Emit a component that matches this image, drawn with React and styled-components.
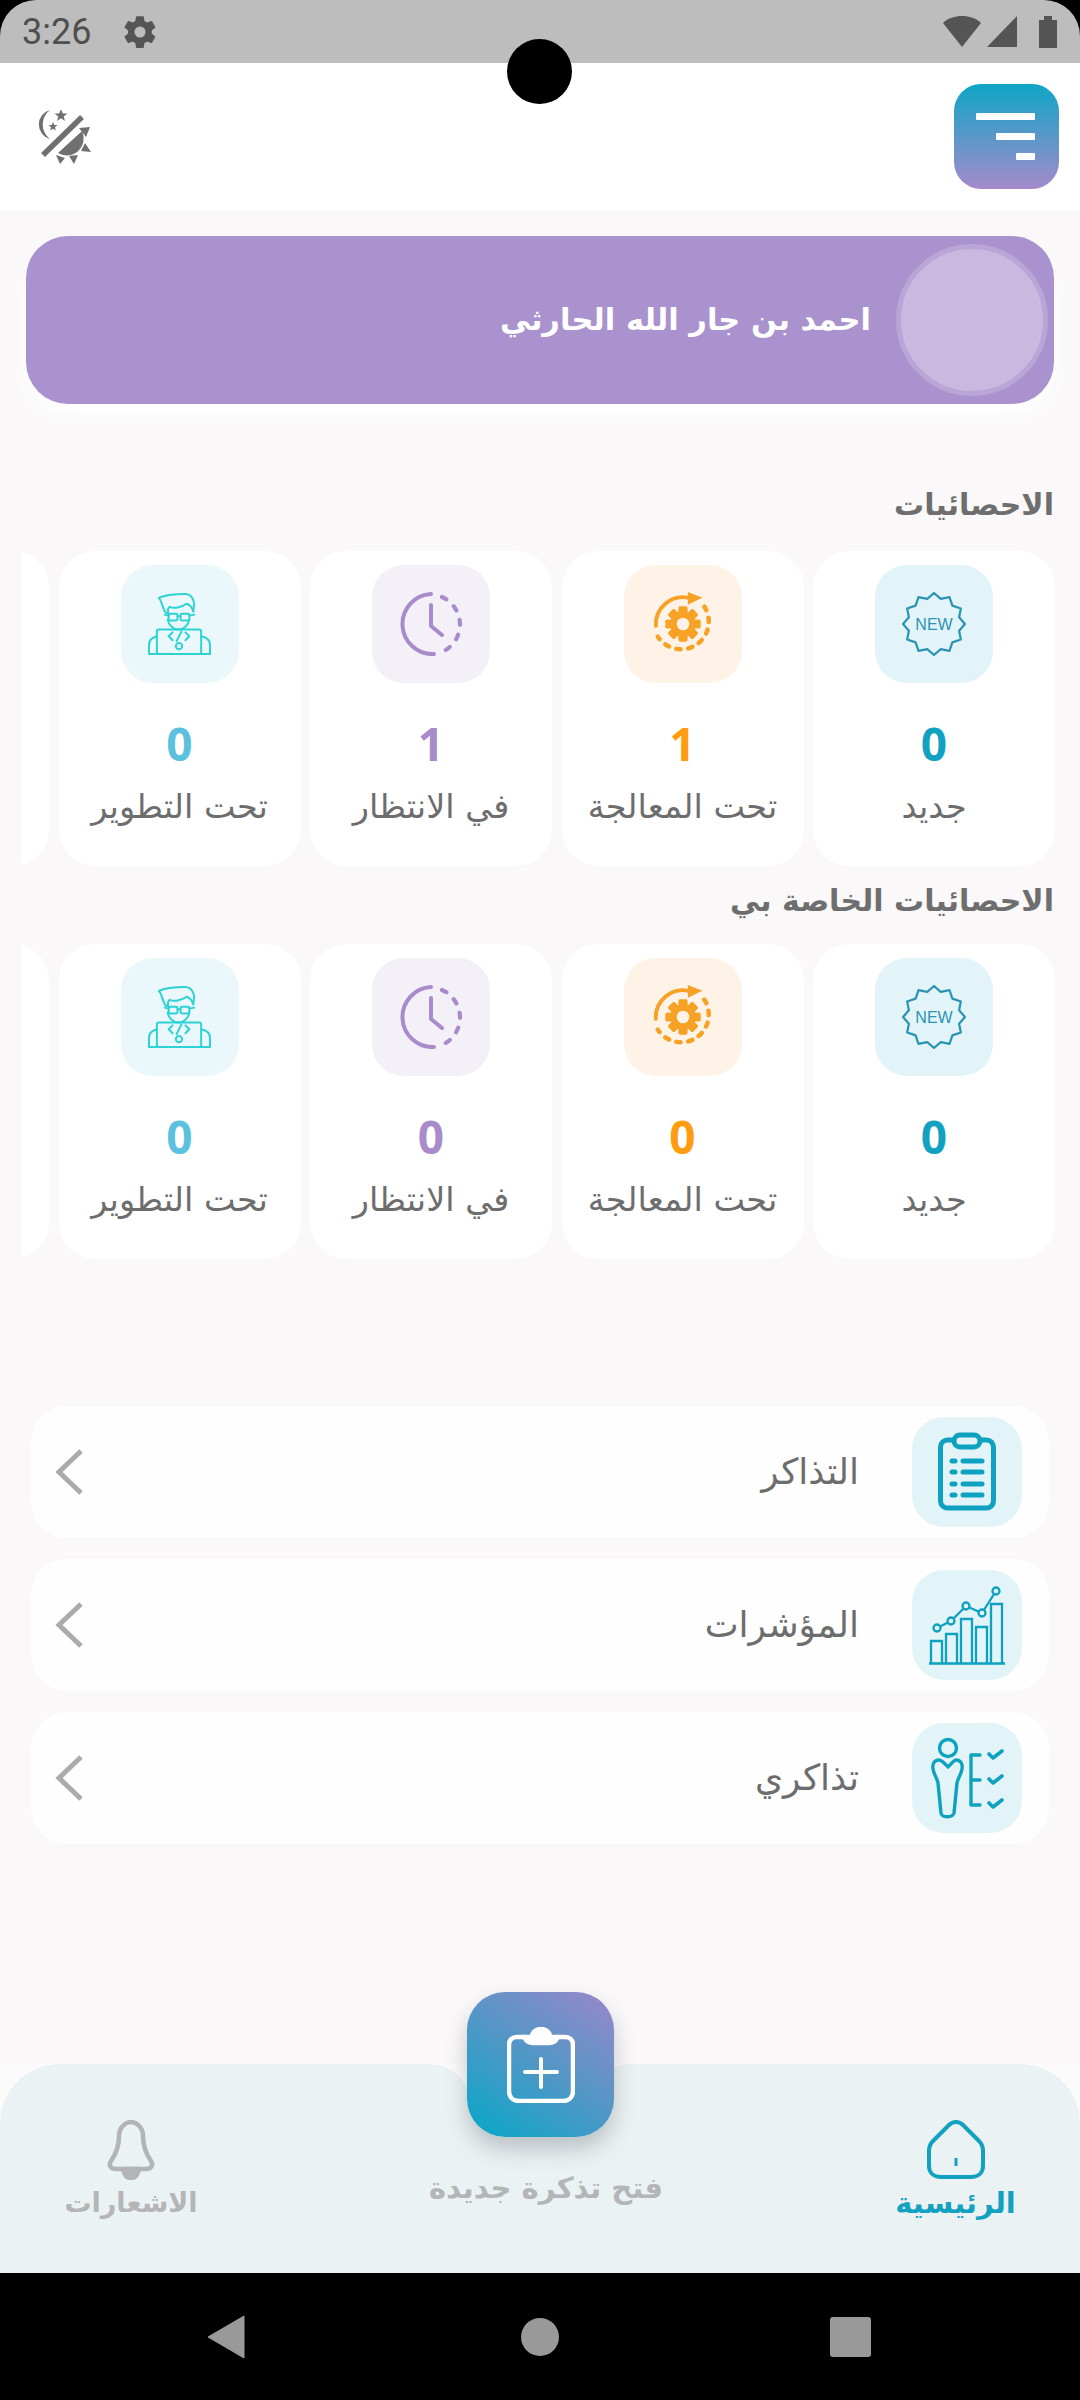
import React from "react";
import styled, { createGlobalStyle } from "styled-components";

const AR = `"DejaVu Sans", "Noto Sans", sans-serif`;

const Global = createGlobalStyle`
  html, body { margin: 0; padding: 0; background: #000; }
  * { box-sizing: border-box; }
`;

const Phone = styled.div`
  width: 1080px; height: 2400px; display: flex; flex-direction: column;
  background: #000; position: relative; overflow: hidden; font-family: ${AR};
`;
const StatusBar = styled.div`
  height: 63px; flex: none; background: #bdbdbd; border-radius: 36px 36px 0 0;
  display: flex; align-items: center; justify-content: space-between; padding: 0 20px 0 22px;
  direction: ltr; color: #555;
`;
const StatusLeft = styled.div`display: flex; align-items: center; gap: 30px;`;
const Clock = styled.span`font: 400 36px Roboto, sans-serif; color: #4f4f4f;`;
const StatusRight = styled.div`display: flex; align-items: center; gap: 3px;`;
const Camera = styled.div`
  position: absolute; left: 507px; top: 39px; width: 65px; height: 65px; border-radius: 50%; background: #000;
`;
const AppBar = styled.header`
  height: 147px; flex: none; background: #fff; display: flex; align-items: flex-start;
  justify-content: space-between; padding: 21px 21px 0 36px; direction: ltr;
`;
const ThemeIcon = styled.svg`width: 56px; height: 56px; margin-top: 26px;`;
const MenuButton = styled.div`
  width: 105px; height: 105px; border-radius: 27px; background: linear-gradient(180deg, #0ea5c6, #a58acb);
  display: flex; flex-direction: column; align-items: flex-end; gap: 13px; padding: 29px 24px 0 0;
`;
const MenuLine = styled.span`
  display: block; height: 7px; width: ${p => p.$w}px; background: #fff; border-radius: 1px;
`;
const Main = styled.main`
  flex: 1; min-height: 0; background: #faf8f9; direction: rtl; padding: 26px 0 0; display: flex; flex-direction: column;
`;
const Banner = styled.section`
  height: 168px; flex: none; margin: 0 26px; background: #a992cd; border-radius: 42px;
  box-shadow: 0 14px 16px rgba(255,255,255,.9);
  display: flex; align-items: center; padding-right: 6px; gap: 25px;
`;
const Avatar = styled.div`
  width: 152px; height: 152px; border-radius: 50%; background: #c9b9e1; border: 5px solid #b9a5d6; flex: none;
`;
const Name = styled.h1`margin: 0; color: #fff; font: 700 30.5px/1 ${AR};`;
const SectionTitle = styled.h2`
  margin: ${p => p.$top}px 26px ${p => p.$bottom}px 0;
  font: 700 30px/40px ${AR}; color: #6e6e6e;
`;
const Scroller = styled.div`
  display: flex; gap: 9.5px; overflow: hidden; margin: 0 25px 0 21px; flex: none;
`;
const StatCard = styled.div`
  width: 242px; height: 315px; flex: none; background: #fff; border-radius: 36px;
  display: flex; flex-direction: column; align-items: center; padding-top: 14px;
`;
const Tile = styled.div`
  width: ${p => p.$size || 118}px; height: ${p => p.$size || 118}px; flex: none; border-radius: 32px; background: ${p => p.$bg};
  display: flex; align-items: center; justify-content: center;
`;
const StatValue = styled.div`
  margin-top: 32px; font: 700 46px/56px "Open Sans", sans-serif; color: ${p => p.$c};
`;
const StatLabel = styled.div`
  margin-top: 16px; font: 400 33.5px/40px ${AR}; color: #6d6d6d; white-space: nowrap;
`;
const List = styled.div`
  margin: 147px 31px 0 31px; display: flex; flex-direction: column; gap: 21px;
`;
const Row = styled.div`
  height: 132px; background: #fefefe; border-radius: 36px; display: flex; align-items: center;
  padding: 0 27px 0 24px; gap: 53px;
`;
const RowTitle = styled.div`flex: 1; font: 400 36px/44px ${AR}; color: #6d6d6d;`;
const Nav = styled.nav`
  height: 209px; flex: none; display: flex; position: relative; direction: ltr; background: #fbfbfb;
`;
const SideTab = styled.div`
  flex: 1; background: #ebf2f3; border-radius: ${p => p.$left ? "60px 40px 0 0" : "40px 60px 0 0"};
  display: flex; flex-direction: column; align-items: ${p => p.$left ? "flex-start" : "flex-end"};
  padding: 56px ${p => p.$left ? 0 : 64}px 0 ${p => p.$left ? 44 : 0}px;
`;
const TabItem = styled.div`
  display: flex; flex-direction: column; align-items: center; gap: 2px; direction: rtl; width: ${p => p.$w}px;
`;
const TabLabel = styled.div`
  font: 700 ${p => p.$s}px/42px ${AR}; color: ${p => p.$c}; white-space: nowrap;
`;
const CenterTab = styled.div`
  width: 120px; flex: none; margin-top: 32px; background: #ebf2f3; position: relative;
  display: flex; justify-content: center; direction: rtl; padding-top: 71px;
`;
const CenterLabel = styled.div`
  font: 700 29px/42px ${AR}; color: #b3b5b7; white-space: nowrap; height: 42px; flex: none; margin-right: -32px;
`;
const Fab = styled.div`
  position: absolute; left: 467px; top: -72px; width: 147px; height: 145px; border-radius: 38px;
  background: linear-gradient(35deg, #12a5c8 8%, #5596c6 52%, #9a87ca 100%);
  box-shadow: 0 12px 22px rgba(60,70,80,.28);
  display: flex; align-items: center; justify-content: center;
`;
const SysNav = styled.div`
  height: 127px; flex: none; background: #000; position: relative; display: flex; align-items: center; direction: ltr;
  padding: 0 209px 0 207px; justify-content: space-between;
`;
const SysCircle = styled.div`width: 38px; height: 38px; border-radius: 50%; background: #999; margin-left: 4px;`;
const SysSquare = styled.div`width: 41px; height: 40px; border-radius: 3px; background: #999;`;

const Starburst = () => {
  const pts = [];
  const n = 12;
  for (let i = 0; i < n * 2; i++) {
    const a = (i * Math.PI) / n - Math.PI / 2;
    const r = i % 2 ? 26 : 31;
    pts.push(`${(32 + r * Math.cos(a)).toFixed(2)},${(32 + r * Math.sin(a)).toFixed(2)}`);
  }
  return (
    <svg width="64" height="64" viewBox="0 0 64 64">
      <polygon points={pts.join(" ")} fill="none" stroke="#2a93b3" strokeWidth="2.2" strokeLinejoin="round" />
      <text x="32" y="37.5" textAnchor="middle" fontFamily="Liberation Sans" fontSize="16" fill="#2a93b3">NEW</text>
    </svg>
  );
};

const GearIcon = () => {
  const teeth = [0, 45, 90, 135, 180, 225, 270, 315];
  return (
    <svg width="62" height="64" viewBox="0 0 64 64">
      <path d="M4 34A28 28 0 0 1 38 5" fill="none" stroke="#f7a125" strokeWidth="4" strokeLinecap="round" />
      <path d="M37 -1L52 5L37 12Z" fill="#f7a125" />
      <path d="M54 14A28 28 0 1 1 6 45" fill="none" stroke="#f7a125" strokeWidth="4.600" strokeLinecap="round" strokeDasharray="4.500 7.800" />
      {teeth.map(t => (
        <rect key={t} x="27.500" y="14" width="9" height="36" rx="1.500" fill="#f7a125" transform={`rotate(${t} 32 32)`} />
      ))}
      <circle cx="32" cy="32" r="13" fill="#f7a125" />
      <circle cx="32" cy="32" r="6.500" fill="#fef3e6" />
    </svg>
  );
};

const ClockIcon = () => (
  <svg width="64" height="64" viewBox="0 0 64 64">
    <path d="M32 2A30 30 0 0 0 35 62" fill="none" stroke="#a78bca" strokeWidth="4" strokeLinecap="round" />
    <path d="M43 5A30 30 0 0 1 45 59" fill="none" stroke="#a78bca" strokeWidth="4.200" strokeLinecap="round" strokeDasharray="5 10" />
    <path d="M32 13V34L43 43" fill="none" stroke="#a78bca" strokeWidth="4" strokeLinecap="round" strokeLinejoin="round" />
  </svg>
);

const DevIcon = () => (
  <svg width="63" height="63" viewBox="0 0 64 64" fill="none" stroke="#2dd2d4" strokeWidth="2" strokeLinejoin="round" strokeLinecap="round">
    <path d="M11 5C17 2 30 1 38 1C44 1 46 5 47 11L46 19C45 15 43 12 39 11C34 15 26 16 22 14C20 16 20 19 21 21L18 20C14 15 15 9 11 5Z" />
    <path d="M20 27C21 32 25 37 31 37C37 37 41 32 42 27" />
    <rect x="21" y="21" width="9" height="7" rx="1.500" />
    <rect x="33" y="21" width="9" height="7" rx="1.500" />
    <path d="M30 23.500H33M21 23L17 22M42 23L47 22" />
    <rect x="9" y="37" width="45" height="25" rx="2" />
    <path d="M1 62V53C1 48 5 45 9 44M54 44C59 45 63 48 63 53V62M1 62H63" />
    <path d="M25 40L21 44L25 48M38 40L42 44L38 48M34 39L29 49" />
    <circle cx="31.500" cy="54" r="3.200" />
  </svg>
);

const ClipboardIcon = () => (
  <svg width="110" height="110" viewBox="0 0 110 110" fill="none" stroke="#0ea2c0">
    <rect x="28.500" y="23" width="53" height="68" rx="7" strokeWidth="5" />
    <rect x="42" y="18" width="26" height="12" rx="6" strokeWidth="5" fill="#e3f4f8" />
    {[44, 55, 67, 78].map(y => (
      <g key={y} strokeWidth="5" strokeLinecap="round">
        <path d={`M40 ${y}H43`} />
        <path d={`M51 ${y}H70`} />
      </g>
    ))}
  </svg>
);

const ChartIcon = () => {
  const bars = [[19, 71], [34, 64], [49, 49], [64, 57], [79, 34]];
  const dots = [[25, 58], [39, 51], [54, 36], [70, 43], [84, 21]];
  return (
    <svg width="110" height="110" viewBox="0 0 110 110" fill="none" stroke="#0ea2c0" strokeWidth="2.300">
      <path d="M17 93.500H93" />
      {bars.map(([x, t]) => <path key={x} d={`M${x} 93V${t}H${x + 11}V93`} />)}
      <polyline points={dots.map(d => d.join(",")).join(" ")} />
      {dots.map(([x, y]) => <circle key={x} cx={x} cy={y} r="3.500" fill="#e3f4f8" />)}
    </svg>
  );
};

const PersonIcon = () => (
  <svg width="110" height="110" viewBox="0 0 110 110" fill="none" stroke="#0ea2c0" strokeWidth="3.400" strokeLinecap="round" strokeLinejoin="round">
    <circle cx="36" cy="25" r="8.500" />
    <path d="M27 37C23 37 20 40 21 46C22 52 25 55 26 60L29 90C29 95 41 95 42 90L45 60C46 55 49 52 50 46C51 40 48 37 44 37C42 37 38 42 36 44C34 42 30 37 27 37Z" />
    <path d="M68 32H59V82H68M59 57H68" />
    <path d="M77 31L81 35L90 28M77 56L81 60L90 53M77 80L81 84L90 77" strokeWidth="3.600" />
  </svg>
);

const Chevron = () => (
  <svg width="28" height="46" viewBox="0 0 28 46" fill="none" stroke="#ababab" strokeWidth="5">
    <path d="M26 2L4 23L26 44" />
  </svg>
);

const stats = [
  { label: "جديد", color: "#12a1c0", bg: "#e3f4f8", icon: <Starburst /> },
  { label: "تحت المعالجة", color: "#ff9c0f", bg: "#fef3e6", icon: <GearIcon /> },
  { label: "في الانتظار", color: "#a78bca", bg: "#f3f0f8", icon: <ClockIcon /> },
  { label: "تحت التطوير", color: "#5cc0df", bg: "#ebf8fb", icon: <DevIcon /> },
];

const StatRow = ({ values }) => (
  <Scroller>
    {stats.map((s, i) => (
      <StatCard key={s.label}>
        <Tile $bg={s.bg}>{s.icon}</Tile>
        <StatValue $c={s.color}>{values[i]}</StatValue>
        <StatLabel>{s.label}</StatLabel>
      </StatCard>
    ))}
    <StatCard />
  </Scroller>
);

const rows = [
  { title: "التذاكر", icon: <ClipboardIcon /> },
  { title: "المؤشرات", icon: <ChartIcon /> },
  { title: "تذاكري", icon: <PersonIcon /> },
];

export default function App() {
  return (
    <Phone>
      <Global />
      <StatusBar>
        <StatusLeft>
          <Clock>3:26</Clock>
          <svg width="38" height="38" viewBox="0 0 24 24" fill="#555">
            <path d="M19.400 13c.04-.33.060-.66.060-1s-.02-.67-.060-1l2.110-1.650a.5.5 0 0 0 .12-.64l-2-3.460a.5.5 0 0 0-.61-.22l-2.490 1a7.300 7.300 0 0 0-1.730-1l-.38-2.650A.49.49 0 0 0 13.930 2h-4a.49.49 0 0 0-.49.42l-.38 2.650c-.61.25-1.170.59-1.690 1l-2.490-1a.5.5 0 0 0-.61.22l-2 3.460a.49.49 0 0 0 .12.64L4.500 11c-.04.33-.07.66-.07 1s.03.67.07 1l-2.110 1.650a.49.49 0 0 0-.12.64l2 3.460c.12.22.39.3.61.22l2.490-1c.52.4 1.080.74 1.690 1l.38 2.650c.04.24.24.42.49.42h4c.25 0 .45-.18.49-.42l.38-2.650c.61-.26 1.170-.6 1.690-1l2.490 1c.22.08.49 0 .61-.22l2-3.460a.5.5 0 0 0-.12-.64L19.400 13zM12 15.500a3.500 3.500 0 1 1 0-7 3.500 3.500 0 0 1 0 7z" />
          </svg>
        </StatusLeft>
        <StatusRight>
          <svg width="40" height="36" viewBox="0 0 40 36" fill="#555"><path d="M20 33L1 9C6 4 13 2 20 2S34 4 39 9Z" /></svg>
          <svg width="34" height="36" viewBox="0 0 34 36" fill="#555"><path d="M2 33L32 2V33Z" /></svg>
          <svg width="24" height="36" viewBox="0 0 24 36" fill="#555" style={{ marginLeft: 14 }}><path d="M8 2H16V6H21V34H3V6H8Z" /></svg>
        </StatusRight>
      </StatusBar>
      <Camera />
      <AppBar>
        <ThemeIcon viewBox="0 0 56 56" fill="#707070">
          <path d="M14 0A15 15 0 0 0 14 29A18 18 0 0 1 14 0Z" />
          <path d="M25 -1L26.800 3.500H31.500L27.700 6.500L29 11L25 8.300L21 11L22.300 6.500L18.500 3.500H23.200Z" />
          <path d="M17 12L18.300 15H21.500L19 17.200L19.800 20.500L17 18.700L14.200 20.500L15 17.200L12.500 15H15.700Z" />
          <path d="M46 7L7 45" stroke="#707070" strokeWidth="5.500" fill="none" />
          <path d="M22 43L46 21A17 17 0 0 1 22 43Z" />
          <path d="M43 18L54 17L50 27ZM49 33L55 42L45 41ZM33 46L42 45L38 54ZM20 45L29 48L24 54Z" />
        </ThemeIcon>
        <MenuButton>
          <MenuLine $w={59} />
          <MenuLine $w={39} />
          <MenuLine $w={19} />
        </MenuButton>
      </AppBar>
      <Main>
        <Banner>
          <Avatar />
          <Name>احمد بن جار الله الحارثي</Name>
        </Banner>
        <SectionTitle $top={81} $bottom={26}>الاحصائيات</SectionTitle>
        <StatRow values={[0, 1, 1, 0]} />
        <SectionTitle $top={15} $bottom={23}>الاحصائيات الخاصة بي</SectionTitle>
        <StatRow values={[0, 0, 0, 0]} />
        <List>
          {rows.map(r => (
            <Row key={r.title}>
              <Tile $size={110} $bg="#e3f4f8">{r.icon}</Tile>
              <RowTitle>{r.title}</RowTitle>
              <Chevron />
            </Row>
          ))}
        </List>
      </Main>
      <Nav>
        <SideTab $left>
          <TabItem $w={174}>
            <svg width="50" height="60" viewBox="0 0 50 60" fill="none" stroke="#b2b4b6" strokeWidth="4.500" strokeLinejoin="round">
              <path d="M25 2C19 2 13 8 13 16C13 27 10 34 5 41C2 45 5 49 10 49H40C45 49 48 45 45 41C40 34 37 27 37 16C37 8 31 2 25 2Z" />
              <path d="M17 49C18 55 21 58 25 58S32 55 33 49Z" fill="#b2b4b6" />
            </svg>
            <TabLabel $s={27} $c="#b3b5b7">الاشعارات</TabLabel>
          </TabItem>
        </SideTab>
        <CenterTab>
          <CenterLabel>فتح تذكرة جديدة</CenterLabel>
        </CenterTab>
        <SideTab>
          <TabItem $w={121}>
            <svg width="58" height="60" viewBox="0 0 58 60" fill="none" stroke="#12a1c0" strokeWidth="4" strokeLinejoin="round">
              <path d="M29 2C26 2 24 3 22 5L6 21C3 24 2 27 2 31V46C2 53 7 57 14 57H44C51 57 56 53 56 46V31C56 27 55 24 52 21L36 5C34 3 32 2 29 2Z" />
              <path d="M29 38V46" strokeWidth="3" />
            </svg>
            <TabLabel $s={29} $c="#12a1c0">الرئيسية</TabLabel>
          </TabItem>
        </SideTab>
        <Fab>
          <svg width="68" height="76" viewBox="0 0 68 76" fill="none" stroke="#fff" strokeWidth="4.500" strokeLinecap="round" strokeLinejoin="round">
            <path d="M17 10H10C5 10 2 13 2 18V64C2 70 6 74 12 74H56C62 74 66 70 66 64V18C66 13 63 10 58 10H51" />
            <path d="M17 10C20 15 22 16 26 16H42C46 16 48 15 51 10H43C43 5 39 2 34 2S25 5 25 10Z" fill="#fff" />
            <path d="M34 32V60M18 45H50" strokeWidth="4" />
          </svg>
        </Fab>
      </Nav>
      <SysNav>
        <svg width="38" height="44" viewBox="0 0 38 44" fill="#999"><path d="M37 1V43L1 22Z" stroke="#999" strokeLinejoin="round" /></svg>
        <SysCircle />
        <SysSquare />
      </SysNav>
    </Phone>
  );
}
